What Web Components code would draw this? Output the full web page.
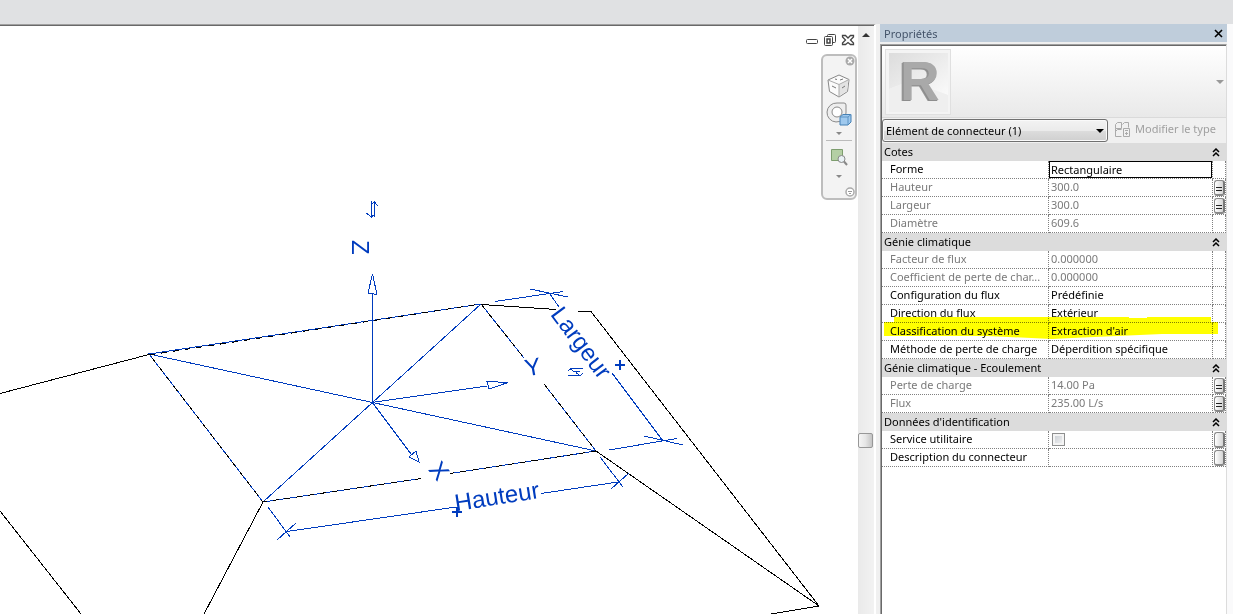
<!DOCTYPE html>
<html lang="fr">
<head>
<meta charset="utf-8">
<title>Propriétés</title>
<style>
html, body { height: 100%; margin: 0; }
body { font: 12px/18px "Noto Sans", "Open Sans", sans-serif; color: #000; background: #f0f0f0; overflow: hidden; }
</style>
</head>
<body>
<app-window>
  <drawing-view slot="view"><nav-bar></nav-bar></drawing-view>
  <view-scrollbar slot="scroll"></view-scrollbar>
  <property-palette slot="palette" heading="Propriétés">
    <type-selector slot="type"></type-selector>
    <property-grid></property-grid>
  </property-palette>
</app-window>

<template id="t-app">
<style>
:host { display: flex; flex-direction: column; height: 100%; }
header { flex: none; height: 24px; background: #e0e1e3; }
main { flex: 1; min-height: 0; display: flex; background: #f0f0f0; }
.frame { flex: 1; min-width: 0; display: flex; border-top: 1px solid #a0a0a0; border-right: 2px solid #fff; box-shadow: inset 0 1px #696969; padding-top: 1px; }
.gap { width: 4px; flex: none; }
.edge { width: 6px; flex: none; background: #fafafb; }
</style>
<header></header>
<main><section class="frame"><slot name="view"></slot><slot name="scroll"></slot></section><div class="gap"></div><slot name="palette"></slot><div class="edge"></div></main>
</template>

<template id="t-view">
<style>
:host { display: block; flex: 1; min-width: 0; position: relative; background: #fff; overflow: hidden; }
svg.scene { display: block; width: 100%; height: 100%; shape-rendering: crispEdges; }
.k { stroke: #000; fill: none; }
.b { stroke: #003cbe; fill: none; }
.d { stroke: #000; fill: none; stroke-dasharray: 6 6; }
.w { stroke: #003cbe; fill: none; stroke-width: 2; }
text { font: 24px "Liberation Sans", sans-serif; fill: #003cbe; }
.tools { position: absolute; top: 7px; right: 3px; display: flex; gap: 4px; }
button { border: 0; padding: 0; background: none; width: 14px; height: 14px; display: block; }
button svg { display: block; }
::slotted(nav-bar) { position: absolute; top: 28px; right: 1px; }
</style>
<svg class="scene" viewBox="0 26 858 588" preserveAspectRatio="xMinYMin slice" role="img" aria-label="Vue 3D du connecteur">
<path class="k" d="M0 393.500L149 354.500M481 304.500L556 309.500M578 311.500H591L819 606L771 614M596 451L819 606M263 502L204 614M0 511L81 614"/>
<path class="b" d="M149 354L481 304L524 358M544 384L596 451L450 473.500M421 478.500L263 502L149 354L596 451M263 502L481 304"/>
<path class="d" d="M149 355L481 304L524 358M544 384L596 451L450 473.500M421 478.500L263 502L149 354"/>
<path class="b" d="M372.500 402V294M372.500 274L368 293L377 294.500ZM372 402.500L487 386M487 381.500L508 382.500L489 389ZM372 402L411 454M416 451L409 457L419 462Z"/>
<path class="b" d="M495 301.500L563 291.500M530 289L568 297M550 294L559 307M612 373L663 441M644 436L683 445M609 450L677 438.500"/>
<path class="b" d="M268 507L290 537M296 523L277 540M287 531.500L456 507M541 493.500L618 482M629 473L611 489M600 457L623 487"/>
<path class="w" d="M615 365H625M620 360V370M452 512H462M457 507V517"/>
<path class="b" d="M371.500 201V217L366 213M371.500 217L375 214M374.500 217V202L378 206M374.500 202L371 205"/>
<path class="b" d="M583 368.500H570.500L568 371M570 368.500L574 371.500H580M568 375.500H580.500L583 373M580 375.500L576 372.500"/>
<text transform="translate(352 241) rotate(90)" x="-1" y="0">Z</text>
<text transform="translate(439 471) rotate(52)" x="-8" y="8">X</text>
<text transform="translate(535 375) rotate(-10)" x="-9" y="0">Y</text>
<text transform="translate(457 511) rotate(-9)" x="-1" y="0">Hauteur</text>
<text transform="translate(551 316) rotate(53)" x="-2" y="0">Largeur</text>
</svg>
<div class="tools">
<button aria-label="Réduire"><svg width="14" height="14"><rect x="1.500" y="6.500" width="11" height="4" rx="1" fill="#fff" stroke="#444"/></svg></button>
<button aria-label="Restaurer"><svg width="14" height="14" fill="#fff" stroke="#444"><rect x="4.500" y="1.500" width="8" height="8" rx="1"/><rect x="1.500" y="3.500" width="8" height="9" rx="1"/><rect x="4" y="6" width="3" height="4" stroke-width="1.500"/></svg></button>
<button aria-label="Fermer"><svg width="14" height="14"><path d="M1.500 2.500H4.500L7 5L9.500 2.500H12.500V4L9.500 7L12.500 10V11.500H9.500L7 9.500L4.500 11.500H1.500V10L4.500 7L1.500 4Z" fill="#fff" stroke="#444" stroke-width="1.300"/></svg></button>
</div>
<slot></slot>
</template>

<template id="t-nav">
<style>
:host { display: flex; flex-direction: column; align-items: center; box-sizing: border-box; width: 36px; height: 146px; border: 2px solid #bdbdbd; border-radius: 6px; background: #f3f3f3; }
button { border: 0; padding: 0; background: none; display: block; }
svg { display: block; }
.dot { align-self: flex-end; height: 10px; width: 10px; }
.cube { margin-top: 8px; } .zoom { margin-top: 7px; }
.wheel { margin-top: 4px; }
.more { height: 12px; }
hr { width: 26px; border: 0; border-top: 1px solid #bbb; margin: 1px 0 0; }
.wide { height: 14px; }
.last { margin-top: auto; margin-bottom: 1px; }
</style>
<button class="dot" aria-label="Fermer la barre"><svg width="10" height="10"><circle cx="5" cy="5" r="4.500" fill="#aaa"/><path d="M3 3L7 7M7 3L3 7" stroke="#fff" stroke-width="1.500"/></svg></button>
<button class="cube" aria-label="ViewCube"><svg width="24" height="24"><path d="M12 1L22 5.500L20.500 17.500L12 23L2.500 17.500L1 6Z" fill="#fbfbfb" stroke="#888"/><path d="M12 11L21.500 6L20 17L12 22Z" fill="#e3e3e3"/><path d="M1 6L12 10.500L22 5.500M12 10.500V23" fill="none" stroke="#aaa"/><path d="M8 5L10 5.500M13 6L16 5M5 12L9 14M15 14L18 12" stroke="#777"/></svg></button>
<button class="wheel" aria-label="Disque de navigation"><svg width="26" height="25"><path d="M11 1H18Q20 1 20 3V11A9.500 9.500 0 1 1 11 1Z" fill="#eee" stroke="#8a8a8a"/><circle cx="11" cy="10" r="5" fill="#fff" stroke="#8a8a8a"/><path d="M14 15L17 12.500H25V20L22 23H14Z" fill="#9fc9ee" stroke="#4580b5"/><path d="M14 15H22V23M22 15L25 12.500" fill="none" stroke="#5c94c5"/></svg></button>
<button class="more" aria-label="Options du disque"><svg width="8" height="10"><path d="M1 4H7L4 7Z" fill="#888"/></svg></button>
<hr>
<button class="zoom" aria-label="Zoom"><svg width="18" height="18"><path d="M1.500 1.500H12.500V12.500H1.500Z" fill="#b4cfa4" stroke="#7d9d6e"/><circle cx="11.500" cy="11" r="3.500" fill="#e9f1f5" stroke="#888"/><path d="M14 13.500L17 17" stroke="#888" stroke-width="2"/></svg></button>
<button class="wide" aria-label="Options de zoom"><svg width="8" height="14"><path d="M1 9H7L4 12Z" fill="#888"/></svg></button>
<button class="dot last" aria-label="Personnaliser"><svg width="10" height="10"><circle cx="5" cy="5" r="4" fill="#fff" stroke="#aaa" stroke-width="1.500"/><path d="M3 4.500H7M4 6.500H6" stroke="#999"/></svg></button>
</template>

<template id="t-scroll">
<style>
:host { display: flex; flex-direction: column; width: 16px; flex: none; background: linear-gradient(90deg, #eaeaea, #f2f2f2); }
button { border: 0; padding: 0; background: none; height: 18px; display: grid; place-items: center; }
.before { flex: 389; } .after { flex: 166; }
.thumb { box-sizing: border-box; height: 15px; width: 15px; border: 1px solid #979797; border-radius: 2px; background: linear-gradient(90deg, #f5f5f5, #e6e6e6 50%, #c4c4c4); }
</style>
<button aria-label="Défiler vers le haut"><svg width="8" height="4"><path d="M0 4L4 0L8 4Z" fill="#333"/></svg></button>
<div class="before"></div><div class="thumb"></div><div class="after"></div>
</template>

<template id="t-palette">
<style>
:host { display: flex; flex-direction: column; width: 347px; flex: none; background: #f0f0f0; }
header { display: flex; align-items: center; justify-content: space-between; height: 18px; padding: 0 4px; background: #bfcddb; color: #44546a; flex: none; }
h1 { margin: 0; font-size: 11px; font-weight: 400; line-height: 18px; padding-top: 1px; }
button { border: 0; padding: 0; background: none; width: 9px; height: 9px; }
button svg { display: block; }
.body { flex: 1; margin-top: 2px; border: 1px solid #a0a0a0; border-right-color: #dcdcdc; border-bottom: 0; box-shadow: inset 1px 1px #696969; padding: 1px 0 0 1px; display: flex; flex-direction: column; }
.grid { flex: 1; background: #fff; }
</style>
<header><h1></h1><button aria-label="Fermer"><svg width="9" height="9"><path d="M1 1L8 8M8 1L1 8" stroke="#000" stroke-width="1.600"/></svg></button></header>
<div class="body"><slot name="type"></slot><div class="grid"><slot></slot></div></div>
</template>

<template id="t-type">
<style>
:host { display: block; flex: none; }
.preview { display: flex; align-items: center; justify-content: space-between; height: 72px; padding: 0 2px 0 3px; box-sizing: border-box; background: linear-gradient(#fff, #e9e9e9); border-bottom: 1px solid #dadada; }
.thumb { display: block; box-sizing: border-box; border: 1px solid #e0e0e0; background: #f4f4f4; width: 66px; height: 66px; }
.preview button { border: 0; padding: 0; background: none; width: 8px; }
svg { display: block; overflow: visible; }
.thumb text { font: bold 55px "Liberation Sans", sans-serif; fill: #a9a9a9; filter: drop-shadow(-1px 1px 0 #8d8d8d) drop-shadow(-1px 0 0 #989898); }
.row { display: flex; align-items: center; height: 25px; gap: 6px; }
.box { position: relative; width: 226px; }
select { appearance: none; display: block; box-sizing: border-box; width: 100%; height: 23px; border: 1px solid #707070; border-radius: 3px; padding: 0 20px 0 3px; font: 11px/18px "Noto Sans", "Open Sans", sans-serif; color: #000; background: linear-gradient(#f3f3f3, #ebebeb 50%, #dddddd 51%, #cfcfcf); box-shadow: inset 0 0 0 1px #fafafa; }
.box svg { position: absolute; right: 4px; top: 10px; pointer-events: none; }
.edit { display: flex; align-items: center; gap: 4px; border: 0; padding: 0 0 3px; background: none; color: #a0a0a0; font: 11px/18px "Noto Sans", "Open Sans", sans-serif; }
</style>
<div class="preview">
<div class="thumb"><svg width="64" height="64" role="img" aria-label="Revit"><defs><linearGradient id="g" x1="0" y1="0" x2="1" y2="1"><stop offset="0" stop-color="#dcdcdc"/><stop offset="1" stop-color="#fafafa"/></linearGradient></defs><path d="M3 3H62V45L24 31L3 39Z" fill="url(#g)"/><path d="M3 39L24 31L62 45V62H3Z" fill="#efefef"/><text x="14" y="50">R</text></svg></div>
<button aria-label="Sélecteur de type"><svg width="8" height="4"><path d="M0 0H8L4 4Z" fill="#999"/></svg></button>
</div>
<div class="row">
<div class="box"><select aria-label="Type"><option>Elément de connecteur (1)</option></select><svg width="8" height="4"><path d="M0 0H8L4 4Z"/></svg></div>
<button class="edit" disabled><svg width="17" height="17" fill="none" stroke="#aaa"><path d="M1.500 3.500L3.500 1.500H7.500V7.500H1.500ZM8.500 3.500L10.500 1.500H14.500V6.500M1.500 7.500V15.500H7.500M1.500 10.500L3.500 8.500H7.500"/><path d="M9.500 7.500H15.500V15.500H9.500ZM11 9.500H14M11 12.500H14M12.500 11V14"/></svg><span>Modifier le type</span></button>
</div>
</template>

<template id="t-grid">
<style>
:host { display: block; }
table { width: 100%; table-layout: fixed; border-collapse: separate; border-spacing: 0; }
col.name { width: 167px; } col.act { width: 13px; }
th, td { box-sizing: border-box; height: 18px; padding: 0; font-weight: 400; text-align: left; line-height: 15px; font-size: 11px; white-space: nowrap; }
th.group { background: #dcdcdc; padding: 0 6px 0 2px; line-height: 18px; }
th.group > div { display: flex; justify-content: space-between; align-items: center; height: 18px; }
tr.prop { position: relative; }
tr.prop th, tr.prop td { border-bottom: 1px dotted #808080; border-right: 1px dotted #808080; }
tr.prop th { padding: 0 0 2px 8px; }
tr.prop th span, tr.prop th label { display: block; overflow: hidden; text-overflow: ellipsis; padding-right: 2px; }
tr.prop td.val { padding: 0 0 2px 2px; }
.off { color: #7a7a7a; }
input[type=text] { display: block; box-sizing: border-box; width: 100%; height: 17px; border: 1px solid #000; padding: 0 1px 1px; font: inherit; color: #000; background: #fff; outline: 0; }
input[type=text].bare { border: 0; background: none; }
input[type=checkbox] { appearance: none; display: block; box-sizing: border-box; width: 13px; height: 13px; margin: 2px 0 0 1px; border: 1px solid #8e8f8f; background: linear-gradient(135deg, #c5cad0, #f6f6f6); box-shadow: inset 0 0 0 2px #f4f4f4; }
button { display: block; border: 0; padding: 0; background: none; font: inherit; }
button svg { display: block; }
.eq { box-sizing: border-box; width: 11px; height: 16px; margin-left: 1px; border: 1px solid #8a8a8a; border-right: 2px solid #777; border-bottom: 2px solid #888; border-radius: 3px; background: linear-gradient(90deg, #fff, #d4d4d4); }
.mark { position: absolute; left: 2px; top: -6px; width: calc(100% - 10px); height: 22px; mix-blend-mode: multiply; pointer-events: none; }
</style>
<table><colgroup><col class="name"><col><col class="act"></colgroup><tbody></tbody></table>
</template>

<script>
const stamp = (host, id) => {
  const root = host.attachShadow({ mode: 'open' });
  root.append(document.getElementById(id).content.cloneNode(true));
  return root;
};
const simple = (tag, id) => customElements.define(tag, class extends HTMLElement {
  constructor() { super(); stamp(this, id); }
});
simple('app-window', 't-app');
simple('drawing-view', 't-view');
simple('nav-bar', 't-nav');
simple('view-scrollbar', 't-scroll');
simple('type-selector', 't-type');

customElements.define('property-palette', class extends HTMLElement {
  connectedCallback() {
    if (this.shadowRoot) return;
    stamp(this, 't-palette').querySelector('h1').textContent = this.getAttribute('heading');
  }
});

const groups = [
  ['Cotes', [
    { name: 'Forme', value: 'Rectangulaire', kind: 'active' },
    { name: 'Hauteur', value: '300.0', off: true, action: '=' },
    { name: 'Largeur', value: '300.0', off: true, action: '=' },
    { name: 'Diamètre', value: '609.6', off: true }]],
  ['Génie climatique', [
    { name: 'Facteur de flux', value: '0.000000', off: true },
    { name: 'Coefficient de perte de char...', value: '0.000000', off: true },
    { name: 'Configuration du flux', value: 'Prédéfinie' },
    { name: 'Direction du flux', value: 'Extérieur' },
    { name: 'Classification du système', value: "Extraction d'air", marked: true },
    { name: 'Méthode de perte de charge', value: 'Déperdition spécifique' }]],
  ['Génie climatique - Ecoulement', [
    { name: 'Perte de charge', value: '14.00 Pa', off: true, action: '=' },
    { name: 'Flux', value: '235.00 L/s', off: true, action: '=' }]],
  ["Données d'identification", [
    { name: 'Service utilitaire', kind: 'check', action: ' ' },
    { name: 'Description du connecteur', kind: 'text', action: ' ' }]]
];
const chevrons = '<svg width="8" height="9" fill="none" stroke="#000" stroke-width="1.500"><path d="M1 4L4 1L7 4M1 8L4 5L7 8"/></svg>';
const equals = '<svg width="8" height="13"><path d="M1 6.500H7M1 9.500H7" stroke="#222"/></svg>';
const marker = '<svg class="mark" viewBox="0 0 334 22" preserveAspectRatio="none"><path d="M0 5H10V0H245V1H263V0H327V5H334V17H278L188 21L168 22L104 19H0Z" fill="#ff0"/></svg>';

customElements.define('property-grid', class extends HTMLElement {
  connectedCallback() {
    if (this.shadowRoot) return;
    const body = stamp(this, 't-grid').querySelector('tbody');
    let n = 0;
    const value = (p, id) => {
      if (p.kind === 'active') return `<input type="text" id="${id}" value="${p.value}">`;
      if (p.kind === 'text') return `<input type="text" class="bare" id="${id}">`;
      if (p.kind === 'check') return `<input type="checkbox" id="${id}">`;
      return p.value;
    };
    body.innerHTML = groups.map(([title, rows]) =>
      `<tr><th class="group" colspan="3" scope="colgroup"><div>${title}<button aria-label="Réduire ${title}">${chevrons}</button></div></th></tr>` +
      rows.map(p => {
        const id = 'p' + (n++);
        const label = p.kind ? `<label for="${id}">${p.name}</label>` : `<span>${p.name}</span>`;
        const act = p.action ? `<button class="eq" aria-label="Associer ${p.name}">${p.action === '=' ? equals : ''}</button>` : '';
        const cell = p.kind === 'active' || p.kind === 'text' ? 'edit' : 'val';
        return `<tr class="prop${p.off ? ' off' : ''}"><th scope="row">${label}${p.marked ? marker : ''}</th><td class="${cell}">${value(p, id)}</td><td>${act}</td></tr>`;
      }).join('')).join('');
  }
});
</script>
</body>
</html>
